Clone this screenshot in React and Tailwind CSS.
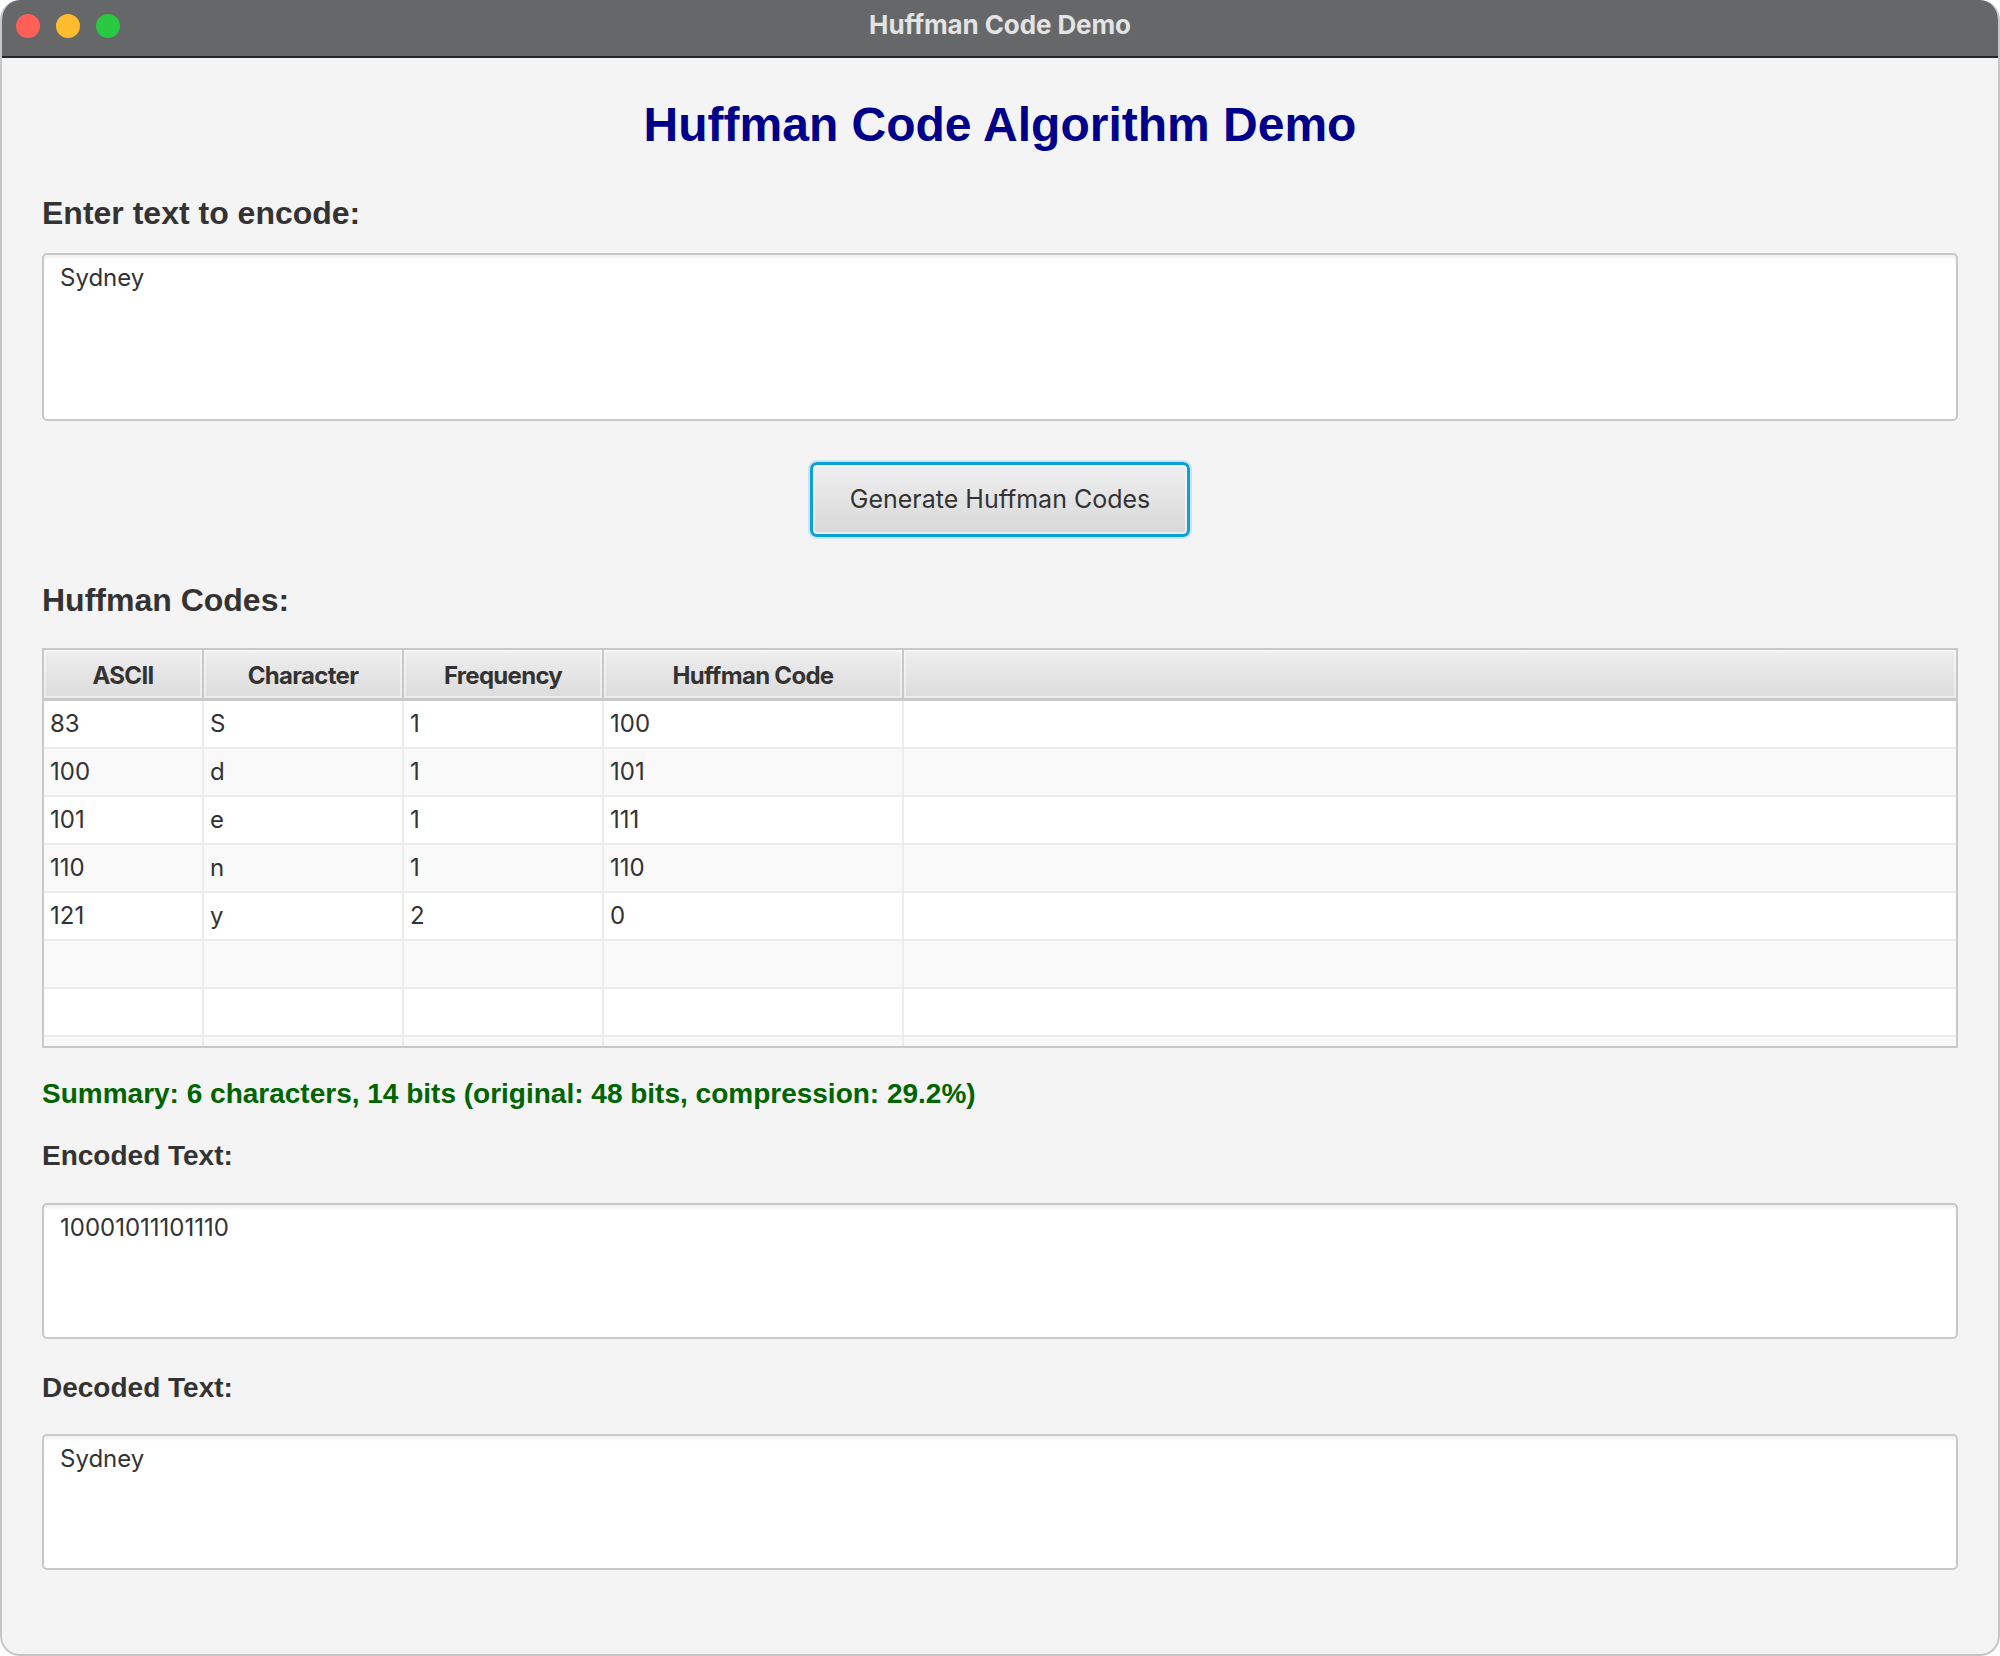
import React from "react";

const rows = [
  ["83", "S", "1", "100"],
  ["100", "d", "1", "101"],
  ["101", "e", "1", "111"],
  ["110", "n", "1", "110"],
  ["121", "y", "2", "0"],
  ["", "", "", ""],
  ["", "", "", ""],
  ["", "", "", ""],
];

const colW = ["w-[160px]", "w-[200px]", "w-[200px]", "w-[300px]"];
const headers = ["ASCII", "Character", "Frequency", "Huffman Code"];

function Label({ children, className = "" }) {
  return (
    <div
      className={
        "h-[40px] flex items-center font-['Liberation_Sans',Arial,sans-serif] font-bold text-[#333333] " +
        className
      }
    >
      {children}
    </div>
  );
}

function TextBox({ h, children, className = "" }) {
  return (
    <div
      className={
        "bg-white border-2 border-[#c8c8c8] rounded-[5px] shadow-[inset_0_3px_3px_rgba(0,0,0,0.06)] px-[16px] pt-[8px] font-['Inter','Noto_Sans',sans-serif] text-[24px] leading-[30px] text-[#333333] " +
        h +
        " " +
        className
      }
    >
      {children}
    </div>
  );
}

export default function App() {
  return (
    <div className="w-[2000px] h-[1656px] bg-white">
      <div className="w-[2000px] h-[1656px] rounded-[20px] overflow-hidden flex flex-col bg-[#f4f4f4] border-x-2 border-b-2 border-[#c6c6c6]">
        {/* Title bar */}
        <div className="relative h-[58px] shrink-0 bg-[#666768] border-b-2 border-[#262626] flex items-center justify-center">
          <div className="absolute left-[14px] top-[14px] flex gap-[16px]">
            <div className="w-[24px] h-[24px] rounded-full bg-[#ff5f57]" />
            <div className="w-[24px] h-[24px] rounded-full bg-[#febc2e]" />
            <div className="w-[24px] h-[24px] rounded-full bg-[#28c840]" />
          </div>
          <div className="font-['Inter','Noto_Sans',sans-serif] font-bold text-[26px] text-[#e3e3e3] tracking-[-0.1px] -mt-[8px]">
            Huffman Code Demo
          </div>
        </div>

        {/* Content */}
        <div className="flex flex-col px-[40px]">
          <div className="mt-[37px] h-[60px] flex items-center justify-center font-['Liberation_Sans',Arial,sans-serif] font-bold text-[48px] text-[#00008b]">
            Huffman Code Algorithm Demo
          </div>

          <Label className="mt-[38px] text-[32px]">Enter text to encode:</Label>

          <TextBox h="h-[168px]" className="mt-[20px]">
            Sydney
          </TextBox>

          <div className="mt-[41px] flex justify-center">
            <div className="w-[380px] h-[75px] rounded-[7px] border-[3px] border-[#0aa0d8] shadow-[0_0_0_2px_rgba(10,160,216,0.18),inset_0_0_0_2px_rgba(255,255,255,0.55)] bg-gradient-to-b from-[#efefef] to-[#d8d8d8] flex items-center justify-center font-['Inter','Noto_Sans',sans-serif] text-[25px] text-[#333333]">
              Generate Huffman Codes
            </div>
          </div>

          <Label className="mt-[43px] text-[32px]">Huffman Codes:</Label>

          {/* Table */}
          <div className="mt-[28px] h-[400px] border-2 border-[#c8c8c8] bg-white overflow-hidden flex flex-col">
            <div className="h-[51px] shrink-0 flex border-b-[3px] border-[#c8c8c8] bg-gradient-to-b from-[#eeeeee] to-[#dcdcdc]">
              {headers.map((hd, i) => (
                <div
                  key={hd}
                  className={
                    colW[i] +
                    " shrink-0 h-full flex items-center justify-center pt-[3px] border-r-2 border-[#c8c8c8] shadow-[inset_0_0_0_2px_rgba(255,255,255,0.45)] font-['Inter','Noto_Sans',sans-serif] font-bold text-[24px] tracking-[-0.7px] text-[#333333]"
                  }
                >
                  {hd}
                </div>
              ))}
              <div className="flex-1 h-full shadow-[inset_0_0_0_2px_rgba(255,255,255,0.45)]" />
            </div>
            {rows.map((r, ri) => (
              <div
                key={ri}
                className={
                  "h-[48px] shrink-0 flex border-b-2 border-[#ececec] " +
                  (ri % 2 === 0 ? "bg-white" : "bg-[#f9f9f9]")
                }
              >
                {r.map((c, ci) => (
                  <div
                    key={ci}
                    className={
                      colW[ci] +
                      " shrink-0 h-full flex items-center pl-[6px] border-r-2 border-[#ececec] font-['Inter','Noto_Sans',sans-serif] text-[24px] text-[#333333]"
                    }
                  >
                    {c}
                  </div>
                ))}
                <div className="flex-1 h-full" />
              </div>
            ))}
          </div>

          <div className="mt-[26px] h-[40px] flex items-center font-['Liberation_Sans',Arial,sans-serif] font-bold text-[28px] text-[#006400]">
            Summary: 6 characters, 14 bits (original: 48 bits, compression: 29.2%)
          </div>

          <Label className="mt-[22px] text-[28px]">Encoded Text:</Label>

          <TextBox h="h-[136px]" className="mt-[27px]">
            10001011101110
          </TextBox>

          <Label className="mt-[29px] text-[28px]">Decoded Text:</Label>

          <TextBox h="h-[136px]" className="mt-[26px]">
            Sydney
          </TextBox>
        </div>
      </div>
    </div>
  );
}
